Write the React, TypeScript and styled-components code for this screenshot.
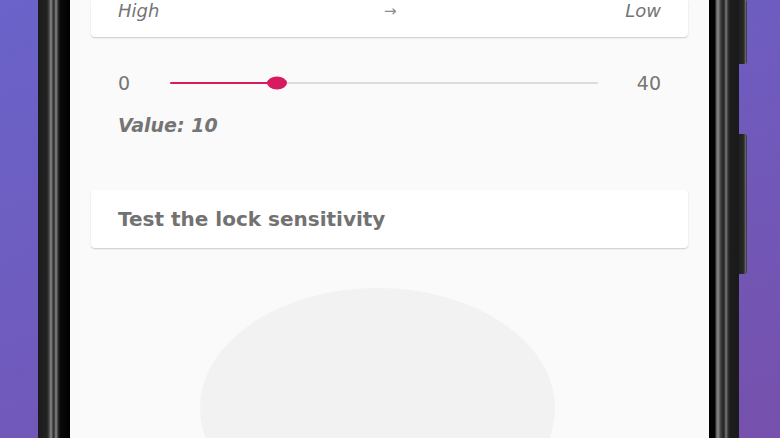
import * as React from 'react';
import styled, { createGlobalStyle } from 'styled-components';

const GlobalStyle = createGlobalStyle`
  html, body {
    margin: 0;
    padding: 0;
    width: 780px;
    height: 438px;
    overflow: hidden;
  }
  body {
    font-family: 'DejaVu Sans', 'Noto Sans', 'Liberation Sans', sans-serif;
  }
`;

const Stage = styled.div`
  display: flex;
  width: 780px;
  height: 438px;
  overflow: hidden;
  background: linear-gradient(160deg, #6a63c9 0%, #6f5bbd 50%, #7650ac 100%);
`;

const Backdrop = styled.div<{ $w: number }>`
  flex: 0 0 ${(p) => p.$w}px;
`;

const Bezel = styled.div<{ $side: 'left' | 'right' }>`
  flex: 0 0 ${(p) => (p.$side === 'left' ? 32 : 30)}px;
  background: ${(p) =>
    p.$side === 'left'
      ? `linear-gradient(90deg, #1b1b1b 0px, #222 9px, #444 11px, #8a8a8a 13px, #3a3a3a 15px, #2a2a2a 16px, #8a8a8a 18px, #333 20px, #0a0a0a 22px, #000 32px)`
      : `linear-gradient(90deg, #000 0px, #050505 6px, #555 7px, #8a8a8a 9px, #3a3a3a 12px, #222 15px, #7a7a7a 17px, #333 19px, #1c1c1c 21px, #1a1a1a 30px)`};
`;

const SideButtons = styled.div`
  flex: 0 0 8px;
  display: flex;
  flex-direction: column;
`;

const SideKey = styled.div<{ $h: number; $gap: number }>`
  height: ${(p) => p.$h}px;
  margin-top: ${(p) => p.$gap}px;
  background: linear-gradient(90deg, #1e1e1e 0%, #2a2a2a 60%, #6a6a6a 85%, #2a2a2a 100%);
  border-radius: 0 2px 2px 0;
`;

const Screen = styled.div`
  flex: 0 0 639px;
  background: #fafafa;
  display: flex;
  flex-direction: column;
  padding: 0 21px;
  box-sizing: border-box;
  overflow: hidden;
`;

const Card = styled.div<{ $h: number; $top?: boolean; $gap?: number }>`
  height: ${(p) => p.$h}px;
  margin-top: ${(p) => p.$gap ?? 0}px;
  background: #fff;
  border-radius: ${(p) => (p.$top ? '0 0 4px 4px' : '4px')};
  box-shadow: 0 1px 2px rgba(0, 0, 0, 0.14), 0 1px 1px rgba(0, 0, 0, 0.06);
  display: flex;
  align-items: ${(p) => (p.$top ? 'flex-start' : 'center')};
  justify-content: space-between;
  padding: 0 27px;
  flex-shrink: 0;
`;

const Hint = styled.span`
  font-size: 18px;
  line-height: 21px;
  font-style: italic;
  color: #757575;
`;

const Arrow = styled.span`
  font-size: 15px;
  line-height: 22px;
  color: #8a8a8a;
  margin-right: 4px;
`;

const SliderRow = styled.div`
  display: flex;
  align-items: center;
  padding: 0 27px;
  margin-top: 35px;
  height: 22px;
`;

const Bound = styled.span<{ $end?: boolean }>`
  font-size: 19px;
  color: #757575;
  width: ${(p) => (p.$end ? 63 : 52)}px;
  text-align: ${(p) => (p.$end ? 'right' : 'left')};
`;

const Track = styled.div`
  flex: 1;
  height: 2px;
  background: #dcdcdc;
  border-radius: 1px;
  position: relative;
`;

const Fill = styled.div`
  height: 100%;
  background: #d81b60;
  border-radius: 1px;
`;

const Thumb = styled.div`
  position: absolute;
  top: 50%;
  width: 20px;
  height: 13px;
  border-radius: 50%;
  background: #d81b60;
  transform: translate(-50%, -50%);
`;

const ValueText = styled.div`
  font-size: 19px;
  line-height: 24px;
  font-weight: 700;
  font-style: italic;
  color: #757575;
  padding: 0 27px;
  margin-top: 19px;
`;

const CardTitle = styled.span`
  font-size: 20px;
  font-weight: 700;
  color: #727272;
`;

const Pad = styled.div`
  flex: 0 0 auto;
  align-self: center;
  width: 355px;
  height: 240px;
  border-radius: 50%;
  background: #f2f2f2;
  margin-top: 40px;
  margin-left: -24px;
`;

function App() {
  const min = 0;
  const max = 40;
  const value = 10;
  const pct = ((value - min) / (max - min)) * 100;

  return (
    <>
      <GlobalStyle />
      <Stage>
        <Backdrop $w={38} />
        <Bezel $side="left" />
        <Screen>
          <Card $h={37} $top>
            <Hint>High</Hint>
            <Arrow>→</Arrow>
            <Hint>Low</Hint>
          </Card>
          <SliderRow>
            <Bound>{min}</Bound>
            <Track>
              <Fill style={{ width: `${pct}%` }} />
              <Thumb style={{ left: `${pct}%` }} />
            </Track>
            <Bound $end>{max}</Bound>
          </SliderRow>
          <ValueText>Value: {value}</ValueText>
          <Card $h={58} $gap={53}>
            <CardTitle>Test the lock sensitivity</CardTitle>
          </Card>
          <Pad />
        </Screen>
        <Bezel $side="right" />
        <SideButtons>
          <SideKey $h={64} $gap={0} />
          <SideKey $h={140} $gap={70} />
        </SideButtons>
        <Backdrop $w={33} />
      </Stage>
    </>
  );
}

export default App;
